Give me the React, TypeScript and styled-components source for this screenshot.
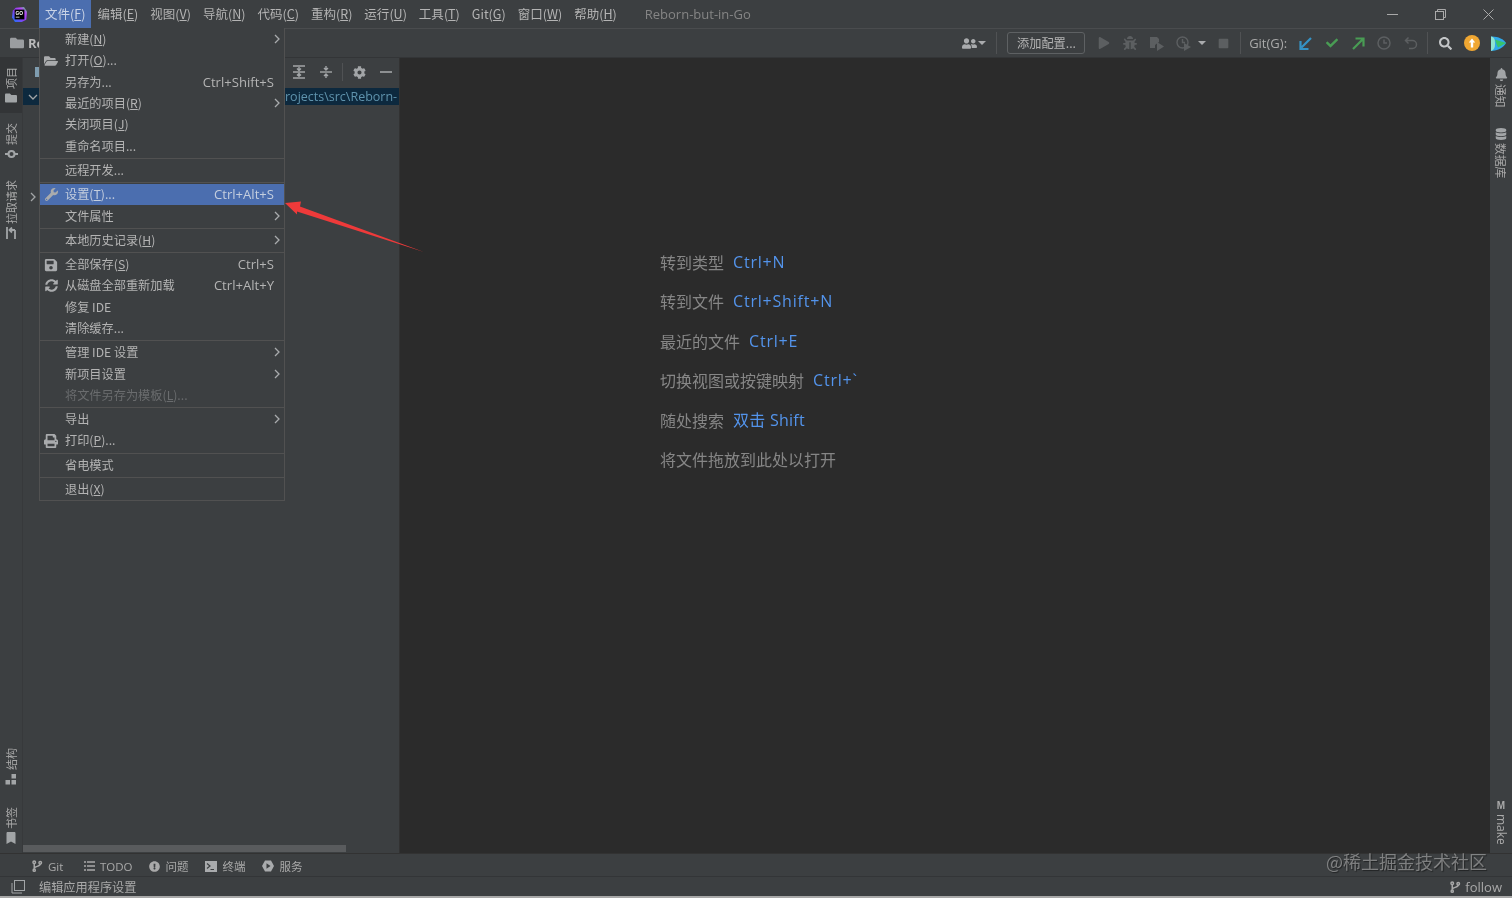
import React from "react";
import styled, { createGlobalStyle } from "styled-components";
import { FaFolderOpen, FaWrench, FaSave, FaSyncAlt, FaPrint, FaCog, FaFolder, FaBell, FaDatabase, FaBookmark, FaExclamationCircle, FaUserFriends, FaBug, FaSearch, FaPlay, FaStop, FaCheck } from "react-icons/fa";

const Global = createGlobalStyle`
  html, body { margin: 0; padding: 0; width: 1512px; height: 898px; overflow: hidden; background: #3c3f41; }
  * { box-sizing: border-box; }
  body { font-family: "Noto Sans CJK SC", "Open Sans", "Liberation Sans", sans-serif; color: #bbbbbb; }
  u { text-underline-offset: 1px; text-decoration-thickness: 1px; }
`;

const Page = styled.div`
  position: relative;
  width: 1512px;
  height: 898px;
  display: flex;
  flex-direction: column;
  background: #3c3f41;
  overflow: hidden;
  filter: blur(0.35px);
`;

const TitleBar = styled.div`
  height: 28px;
  display: flex;
  align-items: stretch;
  flex: none;
`;
const LogoSlot = styled.div`
  width: 39px;
  display: flex;
  align-items: center;
  justify-content: center;
`;
const MenuTitle = styled.div<{ $active?: boolean }>`
  padding: 0 6px;
  display: flex;
  align-items: center;
  font-size: 12.5px;
  line-height: 28px;
  white-space: nowrap;
  color: ${(p) => (p.$active ? "#c9d3e6" : "#b4b4b4")};
  background: ${(p) => (p.$active ? "#4b6eaf" : "transparent")};
`;
const ProjectTitle = styled.div`
  margin-left: 22px;
  font-size: 13px;
  line-height: 28px;
  color: #858585;
  font-family: "Open Sans", sans-serif;
`;
const WindowControls = styled.div`
  margin-left: auto;
  display: flex;
  align-items: center;
`;
const WindowButton = styled.div`
  width: 48px;
  height: 28px;
  display: flex;
  align-items: center;
  justify-content: center;
  color: #a9a9a9;
`;

const ToolBar = styled.div`
  height: 30px;
  flex: none;
  display: flex;
  align-items: center;
  border-top: 1px solid #4a4c4e;
  border-bottom: 1px solid #333537;
`;
const NavCrumb = styled.div`
  display: flex;
  align-items: center;
  gap: 4px;
  padding-left: 10px;
  font-family: "Open Sans", sans-serif;
  font-weight: 700;
  font-size: 13px;
  color: #bbbbbb;
  svg { color: #9a9da0; }
`;
const ToolRight = styled.div`
  margin-left: auto;
  display: flex;
  align-items: center;
  height: 100%;
`;
const ToolIcon = styled.div<{ $w?: number; $c?: string }>`
  width: ${(p) => p.$w ?? 26.4}px;
  flex: none;
  height: 100%;
  display: flex;
  align-items: center;
  justify-content: center;
  color: ${(p) => p.$c ?? "#5c5f61"};
`;
const ToolSep = styled.div<{ $ml?: number; $mr?: number }>`
  width: 1px;
  height: 22px;
  background: #505254;
  margin-left: ${(p) => p.$ml ?? 0}px;
  margin-right: ${(p) => p.$mr ?? 0}px;
`;
const ConfigButton = styled.div`
  width: 78px;
  height: 22px;
  border: 1px solid #5e6163;
  border-radius: 3px;
  display: flex;
  align-items: center;
  justify-content: center;
  font-size: 12.2px;
  color: #b4b4b4;
  margin-right: 5px;
`;
const GitLabel = styled.div`
  font-size: 13px;
  font-family: "Open Sans", sans-serif;
  color: #a9a9a9;
  margin-right: 5px;
`;

const Middle = styled.div`
  flex: 1;
  min-height: 0;
  display: flex;
`;
const LeftStrip = styled.div`
  width: 23px;
  flex: none;
  display: flex;
  flex-direction: column;
  border-right: 1px solid #37393b;
`;
const StripSpacer = styled.div`
  flex: 1;
`;
const StripItem = styled.div<{ $active?: boolean; $mt?: number }>`
  display: flex;
  flex-direction: column;
  align-items: center;
  gap: 3px;
  padding: 9px 0;
  margin-top: ${(p) => p.$mt ?? 0}px;
  background: ${(p) => (p.$active ? "#333537" : "transparent")};
  color: #a2a5a7;
`;
const LeftLabel = styled.span`
  writing-mode: vertical-rl;
  text-orientation: sideways;
  transform: rotate(180deg);
  font-size: 11px;
  line-height: 12px;
  color: #a9a9a9;
  white-space: nowrap;
`;
const RightLabel = styled.span`
  writing-mode: vertical-rl;
  text-orientation: sideways;
  font-size: 11.8px;
  line-height: 12px;
  color: #a9a9a9;
  white-space: nowrap;
`;

const ProjectPanel = styled.div`
  width: 377px;
  flex: none;
  position: relative;
  display: flex;
  flex-direction: column;
  border-right: 1px solid #323232;
`;
const PanelHeader = styled.div`
  height: 30px;
  flex: none;
  display: flex;
  align-items: center;
  justify-content: flex-end;
  color: #a2a5a7;
  padding-bottom: 2px;
`;
const PanelTabIcon = styled.div`
  width: 10px;
  height: 10px;
  margin: 0 auto 0 12px;
  background: #7f9db0;
`;
const PanelIcon = styled.div`
  width: 26.5px;
  display: flex;
  justify-content: center;
  align-items: center;
`;
const PanelSep = styled.div`
  width: 1px;
  height: 18px;
  background: #505254;
  margin: 0 3px;
`;
const TreeRowSel = styled.div`
  height: 17px;
  flex: none;
  background: #0d293e;
  display: flex;
  align-items: center;
  padding-left: 5px;
  color: #a2a5a7;
  overflow: hidden;
`;
const TreePath = styled.span`
  margin-left: 247px;
  font-family: "Open Sans", sans-serif;
  font-size: 12.5px;
  line-height: 17px;
  color: #5f93ad;
  white-space: nowrap;
`;
const TreeRow = styled.div`
  margin-top: 83px;
  height: 17px;
  padding-left: 5px;
  display: flex;
  align-items: center;
  color: #a2a5a7;
`;
const PanelFill = styled.div`
  flex: 1;
`;
const ScrollBar = styled.div`
  width: 323px;
  height: 7px;
  flex: none;
  margin-bottom: 1px;
  background: #595b5d;
`;

const Editor = styled.div`
  flex: 1;
  background: #2b2b2b;
  padding: 184px 0 0 260px;
  display: flex;
  flex-direction: column;
`;
const HintRow = styled.div`
  height: 39.5px;
  display: flex;
  align-items: center;
  gap: 9px;
  font-size: 16px;
  line-height: 24px;
  color: #868686;
  white-space: nowrap;
`;
const HintKey = styled.span<{ $cjk?: boolean }>`
  color: #5394ec;
  letter-spacing: ${(p) => (p.$cjk ? 0.25 : 0.8)}px;
  font-family: "Open Sans", "Noto Sans CJK SC", sans-serif;
`;

const RightStrip = styled.div`
  width: 22px;
  flex: none;
  display: flex;
  flex-direction: column;
  align-items: center;
  padding: 10px 0 8px;
  color: #a2a5a7;
`;
const RightItem = styled.div<{ $mt?: number }>`
  display: flex;
  flex-direction: column;
  align-items: center;
  gap: 3px;
  margin-top: ${(p) => p.$mt ?? 0}px;
`;
const MakeIcon = styled.span`
  font-family: "Liberation Sans", sans-serif;
  font-weight: 700;
  font-size: 10px;
  line-height: 10px;
  color: #a9a9a9;
`;
const MakeLabel = styled(RightLabel)`
  font-family: "Open Sans", sans-serif;
  font-size: 12px;
`;

const ToolWindowBar = styled.div`
  height: 24px;
  flex: none;
  display: flex;
  align-items: center;
  padding: 2px 0 0 31px;
  gap: 17px;
  border-top: 1px solid #323232;
  border-bottom: 1px solid #333537;
`;
const ToolTab = styled.div<{ $mr?: number }>`
  display: flex;
  align-items: center;
  gap: 5px;
  font-size: 11.5px;
  color: #a9a9a9;
  white-space: nowrap;
  margin-right: ${(p) => p.$mr ?? 0}px;
  font-family: "Open Sans", "Noto Sans CJK SC", sans-serif;
`;
const StatusBar = styled.div`
  height: 19px;
  flex: none;
  display: flex;
  align-items: center;
  padding: 0 10px 0 11px;
  font-size: 12.2px;
  color: #a9a9a9;
`;
const StatusText = styled.span`
  margin-left: 14px;
`;
const StatusBranch = styled.div`
  margin-left: auto;
  display: flex;
  align-items: center;
  gap: 4px;
  font-family: "Open Sans", sans-serif;
  font-size: 13px;
`;
const BottomLine = styled.div`
  height: 2px;
  flex: none;
  background: #a8a8a8;
`;

const Menu = styled.div`
  position: absolute;
  left: 39px;
  top: 28px;
  width: 246px;
  height: 473px;
  background: #3c3f41;
  border: 1px solid #515151;
  border-top: 0;
  padding-top: 1px;
  display: flex;
  flex-direction: column;
  font-size: 12.2px;
`;
const MenuRow = styled.div<{ $hl?: boolean; $off?: boolean }>`
  height: 21.3px;
  flex: none;
  display: flex;
  align-items: center;
  padding: 0 0 1px 25px;
  position: relative;
  white-space: nowrap;
  background: ${(p) => (p.$hl ? "#4b6eaf" : "transparent")};
  color: ${(p) => (p.$off ? "#6a6c6e" : p.$hl ? "#c4cede" : "#b4b4b4")};
`;
const MenuIconSlot = styled.div`
  position: absolute;
  left: 4px;
  top: 0;
  bottom: 0;
  width: 14px;
  display: flex;
  align-items: center;
  justify-content: center;
  color: #a9abad;
`;
const MenuShortcut = styled.span`
  margin-left: auto;
  margin-right: 10px;
  font-family: "Open Sans", sans-serif;
  font-size: 13.1px;
`;
const MenuChevron = styled.div`
  margin-left: auto;
  margin-right: 2px;
  display: flex;
  color: #a9abad;
`;
const MenuDivider = styled.div`
  height: 3px;
  flex: none;
  display: flex;
  align-items: center;
  &::after {
    content: "";
    width: 100%;
    height: 1px;
    background: #515151;
  }
`;

const Watermark = styled.div`
  position: absolute;
  right: 25px;
  top: 848px;
  font-size: 18px;
  line-height: 26px;
  color: rgba(190, 190, 190, 0.55);
  text-shadow: 1px 1px 1px rgba(0, 0, 0, 0.45);
  font-family: "Noto Sans CJK SC", sans-serif;
`;
const ArrowSvg = styled.svg`
  position: absolute;
  left: 280px;
  top: 195px;
`;

const Chevron = ({ d = "r" }: { d?: "r" | "d" }) => (
  <svg width="10" height="10" viewBox="0 0 10 10" fill="none" stroke="currentColor" strokeWidth="1.3">
    {d === "r" ? <path d="M3 1l4 4-4 4" /> : <path d="M1 3l4 4 4-4" />}
  </svg>
);

const Branch = ({ size = 13 }: { size?: number }) => (
  <svg width={size} height={size} viewBox="0 0 13 13" fill="none" stroke="currentColor" strokeWidth="1.6">
    <circle cx="3.5" cy="2.5" r="1.4" />
    <circle cx="3.5" cy="11" r="1.2" />
    <circle cx="10" cy="3" r="1.4" />
    <path d="M3.5 4v5.6M10 4.4c0 3-6.5 2-6.5 5" />
  </svg>
);

const Caret = () => (
  <svg width="8" height="4" viewBox="0 0 8 4" fill="currentColor"><path d="M0 0h8L4 4z" /></svg>
);

type Item = { t: React.ReactNode; k?: string; sub?: boolean; icon?: React.ReactNode; hl?: boolean; off?: boolean };

const groups: Item[][] = [
  [
    { t: <>新建(<u>N</u>)</>, sub: true },
    { t: <>打开(<u>O</u>)...</>, icon: <FaFolderOpen size={14} /> },
    { t: "另存为...", k: "Ctrl+Shift+S" },
    { t: <>最近的项目(<u>R</u>)</>, sub: true },
    { t: <>关闭项目(<u>J</u>)</> },
    { t: "重命名项目..." },
  ],
  [{ t: "远程开发..." }],
  [
    { t: <>设置(<u>T</u>)...</>, k: "Ctrl+Alt+S", icon: <FaWrench size={13} />, hl: true },
    { t: "文件属性", sub: true },
  ],
  [{ t: <>本地历史记录(<u>H</u>)</>, sub: true }],
  [
    { t: <>全部保存(<u>S</u>)</>, k: "Ctrl+S", icon: <FaSave size={14} /> },
    { t: "从磁盘全部重新加载", k: "Ctrl+Alt+Y", icon: <FaSyncAlt size={13} /> },
    { t: "修复 IDE" },
    { t: "清除缓存..." },
  ],
  [
    { t: "管理 IDE 设置", sub: true },
    { t: "新项目设置", sub: true },
    { t: <>将文件另存为模板(<u>L</u>)...</>, off: true },
  ],
  [
    { t: "导出", sub: true },
    { t: <>打印(<u>P</u>)...</>, icon: <FaPrint size={14} /> },
  ],
  [{ t: "省电模式" }],
  [{ t: <>退出(<u>X</u>)</> }],
];

const titles: [string, string][] = [
  ["编辑", "E"], ["视图", "V"], ["导航", "N"], ["代码", "C"], ["重构", "R"], ["运行", "U"], ["工具", "T"], ["Git", "G"], ["窗口", "W"], ["帮助", "H"],
];

const hints: [string, string, boolean?][] = [
  ["转到类型", "Ctrl+N"],
  ["转到文件", "Ctrl+Shift+N"],
  ["最近的文件", "Ctrl+E"],
  ["切换视图或按键映射", "Ctrl+`"],
  ["随处搜索", "双击 Shift", true],
  ["将文件拖放到此处以打开", ""],
];

const GoLogo = () => (
  <svg width="15" height="15" viewBox="0 0 20 20">
    <defs>
      <linearGradient id="gl" x1="0" y1="1" x2="1" y2="0">
        <stop offset="0" stopColor="#0d7bf7" />
        <stop offset="0.45" stopColor="#8a3ff0" />
        <stop offset="0.75" stopColor="#b74af7" />
        <stop offset="1" stopColor="#3bea62" />
      </linearGradient>
    </defs>
    <path d="M5 1l11-1 4 6-1 11-6 3H4l-4-6 1-9z" fill="url(#gl)" />
    <rect x="3.500" y="3.500" width="13" height="13" fill="#000" />
    <text x="4.500" y="10.500" fontSize="6.500" fontWeight="700" fill="#fff" fontFamily="Liberation Sans, sans-serif">GO</text>
    <rect x="5" y="13" width="5" height="1" fill="#fff" />
  </svg>
);

export default function App() {
  return (
    <Page>
      <Global />
      <TitleBar>
        <LogoSlot><GoLogo /></LogoSlot>
        <MenuTitle $active>文件(<u>F</u>)</MenuTitle>
        {titles.map(([a, b]) => (
          <MenuTitle key={b}>{a}(<u>{b}</u>)</MenuTitle>
        ))}
        <ProjectTitle>Reborn-but-in-Go</ProjectTitle>
        <WindowControls>
          <WindowButton>
            <svg width="11" height="11" viewBox="0 0 11 11" stroke="currentColor" fill="none"><path d="M0 5.5h11" /></svg>
          </WindowButton>
          <WindowButton>
            <svg width="11" height="11" viewBox="0 0 11 11" stroke="currentColor" fill="none"><rect x="0.5" y="2.5" width="8" height="8" /><path d="M2.5 2.5v-2h8v8h-2" /></svg>
          </WindowButton>
          <WindowButton>
            <svg width="11" height="11" viewBox="0 0 11 11" stroke="currentColor" fill="none"><path d="M0.5 0.5l10 10M10.500 0.5l-10 10" /></svg>
          </WindowButton>
        </WindowControls>
      </TitleBar>

      <ToolBar>
        <NavCrumb><FaFolder size={14} />Re</NavCrumb>
        <ToolRight>
          <ToolIcon $w={16} $c="#a9abad"><FaUserFriends size={15} /></ToolIcon>
          <ToolIcon $w={10} $c="#a9abad"><Caret /></ToolIcon>
          <ToolSep $ml={9} $mr={10} />
          <ConfigButton>添加配置...</ConfigButton>
          <ToolIcon $w={26.6}><FaPlay size={12} /></ToolIcon>
          <ToolIcon $w={26.6}><FaBug size={14} /></ToolIcon>
          <ToolIcon $w={26.6}>
            <svg width="16" height="15" viewBox="0 0 16 15" fill="currentColor"><path d="M1 1h7l2 2v3l-4 3v3H1z" /><path d="M8 6l7 4.5-7 4.5z" /></svg>
          </ToolIcon>
          <ToolIcon $w={26.6}>
            <svg width="16" height="15" viewBox="0 0 16 15" fill="none" stroke="currentColor" strokeWidth="1.4"><circle cx="6.5" cy="6.5" r="5.5" /><path d="M6.5 3v3.5h2.5" /><path d="M8 7l7 4-7 4z" fill="currentColor" stroke="none" /></svg>
          </ToolIcon>
          <ToolIcon $w={9.4} $c="#a9abad"><Caret /></ToolIcon>
          <ToolIcon $w={33.9}><FaStop size={11} /></ToolIcon>
          <ToolSep $mr={8} />
          <GitLabel>Git(G):</GitLabel>
          <ToolIcon $c="#3592c4">
            <svg width="13" height="13" viewBox="0 0 13 13" fill="none" stroke="currentColor" strokeWidth="2.2"><path d="M12 1L2.5 10.5M1.5 4v8h8" /></svg>
          </ToolIcon>
          <ToolIcon $c="#499c54"><FaCheck size={12} /></ToolIcon>
          <ToolIcon $c="#499c54">
            <svg width="13" height="13" viewBox="0 0 13 13" fill="none" stroke="currentColor" strokeWidth="2.2"><path d="M1 12l9.5-9.5M3.5 1.5h8v8" /></svg>
          </ToolIcon>
          <ToolIcon>
            <svg width="14" height="14" viewBox="0 0 14 14" fill="none" stroke="currentColor" strokeWidth="1.5"><circle cx="7" cy="7" r="6" /><path d="M7 3.5V7h3" /></svg>
          </ToolIcon>
          <ToolIcon>
            <svg width="14" height="14" viewBox="0 0 14 14" fill="none" stroke="currentColor" strokeWidth="1.5"><path d="M1.5 4.5h7a4 4 0 010 8H5M4.5 1.5l-3 3 3 3" /></svg>
          </ToolIcon>
          <ToolSep $ml={3} $mr={4} />
          <ToolIcon $w={26} $c="#c4c6c8"><FaSearch size={13} /></ToolIcon>
          <ToolIcon $w={27}>
            <svg width="16" height="16" viewBox="0 0 16 16"><circle cx="8" cy="8" r="8" fill="#f0a732" /><path d="M8 3.5L4.8 7.5h2v5h2.4v-5h2z" fill="#fff" /></svg>
          </ToolIcon>
          <ToolIcon $w={27}>
            <svg width="17" height="17" viewBox="0 0 17 17">
              <path d="M1 1.5C7 1 14 4 16 8c-2 4-8 8-15 8z" fill="#2fa8ea" />
              <path d="M1 1.5C4 2 5 4 5 8.5S4 15 1 16z" fill="#8fe3d0" />
              <path d="M5 4.5l11 3.5-8 4.5c-1-2-2-5-3-8z" fill="#38c46a" />
            </svg>
          </ToolIcon>
        </ToolRight>
      </ToolBar>

      <Middle>
        <LeftStrip>
          <StripItem $active>
            <LeftLabel>项目</LeftLabel>
            <FaFolder size={12} />
          </StripItem>
          <StripItem $mt={1}>
            <LeftLabel>提交</LeftLabel>
            <svg width="13" height="12" viewBox="0 0 13 12" fill="none" stroke="currentColor" strokeWidth="2"><circle cx="6.5" cy="6" r="3" /><path d="M0 6h3M10 6h3" /></svg>
          </StripItem>
          <StripItem $mt={2}>
            <LeftLabel>拉取请求</LeftLabel>
            <svg width="12" height="12" viewBox="0 0 12 12" fill="none" stroke="currentColor" strokeWidth="1.8"><path d="M2 0v12M10 3v9M10 3H5M7 0.5L4.5 3 7 5.5" /></svg>
          </StripItem>
          <StripSpacer />
          <StripItem>
            <LeftLabel>结构</LeftLabel>
            <svg width="12" height="12" viewBox="0 0 12 12" fill="currentColor"><rect x="6.5" y="1" width="4.5" height="4.5" /><rect x="0.5" y="7" width="4.5" height="4.5" /><rect x="6.5" y="7" width="4.5" height="4.5" /></svg>
          </StripItem>
          <StripItem $mt={4}>
            <LeftLabel>书签</LeftLabel>
            <FaBookmark size={12} />
          </StripItem>
        </LeftStrip>

        <ProjectPanel>
          <PanelHeader>
            <PanelTabIcon />
            <PanelIcon>
              <svg width="14" height="14" viewBox="0 0 14 14" fill="none" stroke="currentColor" strokeWidth="1.4"><path d="M1 1h12M1 13h12M1 7h12" /><path d="M7 2v3M5 3.5L7 5.5 9 3.5M7 12V9M5 10.5L7 8.500 9 10.5" transform="matrix(1 0 0 -1 0 14)" /></svg>
            </PanelIcon>
            <PanelIcon>
              <svg width="14" height="14" viewBox="0 0 14 14" fill="none" stroke="currentColor" strokeWidth="1.4"><path d="M1 7h12" /><path d="M7 1v3.500M5 3L7 5 9 3M7 13V9.500M5 11L7 9 9 11" /></svg>
            </PanelIcon>
            <PanelSep />
            <PanelIcon><FaCog size={13} /></PanelIcon>
            <PanelIcon>
              <svg width="12" height="12" viewBox="0 0 12 12" stroke="currentColor" strokeWidth="1.6"><path d="M0 6h12" /></svg>
            </PanelIcon>
          </PanelHeader>
          <TreeRowSel>
            <Chevron d="d" />
            <TreePath>rojects\src\Reborn-</TreePath>
          </TreeRowSel>
          <TreeRow><Chevron /></TreeRow>
          <PanelFill />
          <ScrollBar />
        </ProjectPanel>

        <Editor>
          {hints.map(([a, b, cjk]) => (
            <HintRow key={a}>
              {a}
              {b && <HintKey $cjk={cjk}>{b}</HintKey>}
            </HintRow>
          ))}
        </Editor>

        <RightStrip>
          <RightItem>
            <FaBell size={13} />
            <RightLabel>通知</RightLabel>
          </RightItem>
          <RightItem $mt={20}>
            <FaDatabase size={12} />
            <RightLabel>数据库</RightLabel>
          </RightItem>
          <StripSpacer />
          <RightItem>
            <MakeIcon>M</MakeIcon>
            <MakeLabel>make</MakeLabel>
          </RightItem>
        </RightStrip>
      </Middle>

      <ToolWindowBar>
        <ToolTab $mr={3.5}><Branch size={12} />Git</ToolTab>
        <ToolTab>
          <svg width="11" height="10" viewBox="0 0 11 10" stroke="currentColor" strokeWidth="1.6"><path d="M0 1h2M3 1h8M0 5h2M3 5h8M0 9h2M3 9h8" /></svg>
          TODO
        </ToolTab>
        <ToolTab><FaExclamationCircle size={11} />问题</ToolTab>
        <ToolTab>
          <svg width="12" height="11" viewBox="0 0 12 11"><rect width="12" height="11" fill="#a9abad" /><path d="M2 2.500L5 5 2 7.500" stroke="#3c3f41" strokeWidth="1.200" fill="none" /><path d="M5.500 8.500H9" stroke="#3c3f41" /></svg>
          终端
        </ToolTab>
        <ToolTab>
          <svg width="12" height="12" viewBox="0 0 12 12"><path d="M3 0.500h6L12 6 9 11.500H3L0 6z" fill="#a9abad" /><path d="M4.500 3.200L8.500 6l-4 2.800z" fill="#3c3f41" /></svg>
          服务
        </ToolTab>
      </ToolWindowBar>

      <StatusBar>
        <svg width="14" height="14" viewBox="0 0 14 14" fill="none" stroke="#a2a5a7"><rect x="3.500" y="0.500" width="10" height="10" /><path d="M1 3v10h10" /></svg>
        <StatusText>编辑应用程序设置</StatusText>
        <StatusBranch><Branch size={12} />follow</StatusBranch>
      </StatusBar>
      <BottomLine />

      <Menu>
        {groups.map((g, i) => (
          <React.Fragment key={i}>
            {i > 0 && <MenuDivider />}
            {g.map((it, j) => (
              <MenuRow key={j} $hl={it.hl} $off={it.off}>
                {it.icon && <MenuIconSlot>{it.icon}</MenuIconSlot>}
                {it.t}
                {it.k && <MenuShortcut>{it.k}</MenuShortcut>}
                {it.sub && <MenuChevron><Chevron /></MenuChevron>}
              </MenuRow>
            ))}
          </React.Fragment>
        ))}
      </Menu>

      <ArrowSvg width="150" height="62" viewBox="0 0 150 62">
        <path d="M5 8L21 6.500 20 11.500 144 57 17 16.500 17 19.500z" fill="#ee3a3a" />
      </ArrowSvg>

      <Watermark>@稀土掘金技术社区</Watermark>
    </Page>
  );
}
